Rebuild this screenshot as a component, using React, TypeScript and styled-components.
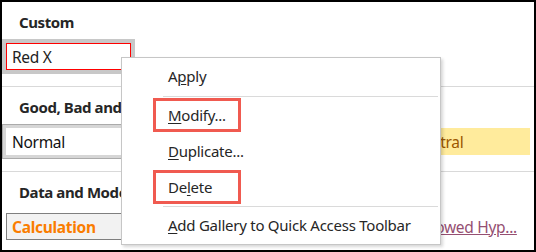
import React from 'react';
import styled, { createGlobalStyle } from 'styled-components';

const GlobalStyle = createGlobalStyle`
  body {
    margin: 0;
    background: #fff;
    font-family: "Noto Sans", "Open Sans", sans-serif;
  }
`;

const Frame = styled.div`
  position: relative;
  width: 536px;
  height: 252px;
  box-sizing: border-box;
  border: 2px solid #000;
  background: #fff;
  overflow: hidden;
`;

const Section = styled.section`
  padding: 8px 0 12px;
  border-bottom: 1px solid #d9d9d9;
`;

const SectionTitle = styled.h3`
  margin: 0 0 5px 17px;
  font-size: 15px;
  line-height: 24px;
  font-weight: 700;
  letter-spacing: -0.4px;
  color: #262626;
  white-space: nowrap;
`;

const CellRow = styled.div`
  display: grid;
  grid-template-columns: repeat(4, 133px);
`;

type SlotState = 'hover' | 'current' | undefined;

const Slot = styled.div<{ $state?: SlotState }>`
  height: 35px;
  box-sizing: border-box;
  padding: 4px;
  background: ${(p) => (p.$state === 'hover' ? '#c8c8c8' : p.$state === 'current' ? '#d6d6d6' : 'transparent')};
  box-shadow: ${(p) => (p.$state === 'current' ? 'inset 0 0 0 1px #ababab' : 'none')};
`;

type Variant =
  | 'redx'
  | 'normal'
  | 'bad'
  | 'good'
  | 'neutral'
  | 'calc'
  | 'check'
  | 'explanatory'
  | 'followed';

const variantCss: Record<Variant, string> = {
  redx: 'background:#fff; border:1px solid #ff0000; color:#222;',
  normal: 'background:#fff; border:1px solid transparent; color:#111;',
  bad: 'background:#ffc7ce; border:1px solid transparent; color:#9c0006;',
  good: 'background:#c6efce; border:1px solid transparent; color:#006100;',
  neutral: 'background:#ffeb9c; border:1px solid transparent; color:#9c5700;',
  calc: 'background:#f2f2f2; border:1px solid #7f7f7f; color:#fa7d00; font-weight:700;',
  check: 'background:#a5a5a5; border:3px double #3f3f3f; color:#fff; font-weight:700;',
  explanatory: 'background:#fff; border:1px solid transparent; color:#7f7f7f; font-style:italic;',
  followed: 'background:#fff; border:1px solid transparent; color:#954f72; text-decoration:underline;',
};

const Cell = styled.div<{ $variant: Variant }>`
  height: 27px;
  box-sizing: border-box;
  display: flex;
  align-items: center;
  padding: 0 5px;
  font-size: 15.5px;
  letter-spacing: -0.3px;
  white-space: nowrap;
  overflow: hidden;
  ${(p) => variantCss[p.$variant]}
`;

const Menu = styled.div`
  position: absolute;
  left: 119px;
  top: 55px;
  width: 320px;
  box-sizing: border-box;
  padding-bottom: 1px;
  background: #fff;
  border: 1px solid #c6c6c6;
  box-shadow: 2px 2px 3px rgba(0, 0, 0, 0.16);
`;

const MenuItem = styled.div`
  height: 36px;
  display: flex;
  align-items: center;
  padding-left: 46px;
  font-size: 15px;
  letter-spacing: -0.25px;
  color: #262626;
  white-space: nowrap;

  u {
    text-underline-offset: 2px;
  }
`;

const Marked = styled.span`
  display: inline-flex;
  align-items: center;
  width: 88px;
  height: 34px;
  box-sizing: border-box;
  margin-left: -15px;
  padding-left: 12px;
  border: 3px solid #f05a50;
`;

const MenuSeparator = styled.div<{ $top: number }>`
  height: 1px;
  margin: ${(p) => p.$top}px 2px 0 41px;
  background: #dadada;
`;

const App: React.FC = () => {
  return (
    <>
      <GlobalStyle />
      <Frame>
        <Section>
          <SectionTitle>Custom</SectionTitle>
          <CellRow>
            <Slot $state="hover">
              <Cell $variant="redx">Red X</Cell>
            </Slot>
          </CellRow>
        </Section>

        <Section>
          <SectionTitle>Good, Bad and Neutral</SectionTitle>
          <CellRow>
            <Slot $state="current">
              <Cell $variant="normal">Normal</Cell>
            </Slot>
            <Slot>
              <Cell $variant="bad">Bad</Cell>
            </Slot>
            <Slot>
              <Cell $variant="good">Good</Cell>
            </Slot>
            <Slot>
              <Cell $variant="neutral">Neutral</Cell>
            </Slot>
          </CellRow>
        </Section>

        <Section>
          <SectionTitle>Data and Model</SectionTitle>
          <CellRow>
            <Slot>
              <Cell $variant="calc">Calculation</Cell>
            </Slot>
            <Slot>
              <Cell $variant="check">Check Cell</Cell>
            </Slot>
            <Slot>
              <Cell $variant="explanatory">Explanatory ...</Cell>
            </Slot>
            <Slot>
              <Cell $variant="followed">Followed Hyp...</Cell>
            </Slot>
          </CellRow>
        </Section>

        <Menu>
          <MenuItem>
            A<u>p</u>ply
          </MenuItem>
          <MenuSeparator $top={2} />
          <MenuItem>
            <Marked>
              <u>M</u>odify...
            </Marked>
          </MenuItem>
          <MenuItem>
            <u>D</u>uplicate...
          </MenuItem>
          <MenuItem>
            <Marked>
              De<u>l</u>ete
            </Marked>
          </MenuItem>
          <MenuSeparator $top={1} />
          <MenuItem>
            <u>A</u>dd Gallery to Quick Access Toolbar
          </MenuItem>
        </Menu>
      </Frame>
    </>
  );
};

export default App;
